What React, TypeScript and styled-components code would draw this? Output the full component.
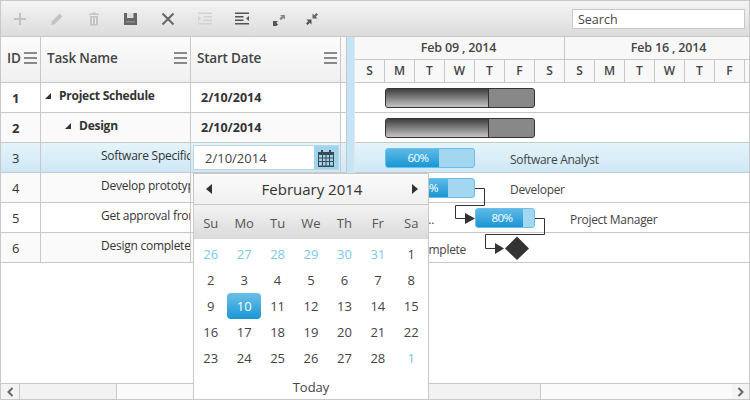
import React from "react"
import styled, { createGlobalStyle } from "styled-components"

const FONT = `"Open Sans", "Noto Sans", sans-serif`
const LINE = "#c8c8c8"

const GlobalStyle = createGlobalStyle`
  html, body {
    margin: 0;
    padding: 0;
    background: #fff;
  }
`

interface Task {
  id: number
  name: string
  date: string
  level: number
  bold?: boolean
}

const tasks: Task[] = [
  { id: 1, name: "Project Schedule", date: "2/10/2014", level: 0, bold: true },
  { id: 2, name: "Design", date: "2/10/2014", level: 1, bold: true },
  { id: 3, name: "Software Specification", date: "2/10/2014", level: 2 },
  { id: 4, name: "Develop prototype", date: "2/10/2014", level: 2 },
  { id: 5, name: "Get approval from customer", date: "2/10/2014", level: 2 },
  { id: 6, name: "Design complete", date: "2/10/2014", level: 2 },
]

const dayLetters = ["S", "M", "T", "W", "T", "F", "S", "S", "M", "T", "W", "T", "F", "S"]
const weekDays = ["Su", "Mo", "Tu", "We", "Th", "Fr", "Sa"]
const calendarDays = [
  26, 27, 28, 29, 30, 31, 1, 2, 3, 4, 5, 6, 7, 8, 9, 10, 11, 12, 13, 14, 15, 16, 17, 18, 19, 20, 21, 22, 23, 24, 25, 26,
  27, 28, 1,
]

const Frame = styled.div`
  position: relative;
  display: flex;
  flex-direction: column;
  box-sizing: border-box;
  width: 750px;
  height: 400px;
  border: 1px solid ${LINE};
  overflow: hidden;
  background: #fff;
  font-family: ${FONT};
  color: #333;
`

const Toolbar = styled.div`
  display: flex;
  align-items: center;
  box-sizing: border-box;
  height: 36px;
  flex: none;
  padding: 0 4px 0 0;
  background: linear-gradient(#f4f4f4, #dcdcdc);
  border-bottom: 1px solid ${LINE};
`

const ToolButton = styled.div<{ $width?: number; $drop?: number }>`
  display: flex;
  align-items: center;
  justify-content: center;
  width: ${(p) => p.$width ?? 37}px;
  height: 35px;
  flex: none;
  padding-top: ${(p) => p.$drop ?? 0}px;
  box-sizing: border-box;
`

const SearchBox = styled.div`
  box-sizing: border-box;
  width: 173px;
  height: 20px;
  margin-left: auto;
  padding-left: 5px;
  background: #fff;
  border: 1px solid ${LINE};
  font-size: 12.5px;
  line-height: 19px;
  color: #444;
`

const Body = styled.div`
  display: flex;
  flex: 1;
  min-height: 0;
`

const GridPane = styled.div`
  width: 340px;
  flex: none;
`

const columns = `40px 150px 150px`

const GridHeader = styled.div`
  display: grid;
  grid-template-columns: ${columns};
  height: 46px;
  box-sizing: border-box;
  background: linear-gradient(#fbfbfb, #f0f0f0);
  border-bottom: 1px solid ${LINE};
`

const HeaderCell = styled.div<{ $pad: number }>`
  display: flex;
  align-items: center;
  justify-content: space-between;
  box-sizing: border-box;
  padding: 0 3px 3px ${(p) => p.$pad}px;
  border-right: 1px solid ${LINE};
  font-size: 13.5px;
  font-weight: 600;
  color: #444;
  letter-spacing: -0.2px;
`

const GridRow = styled.div<{ $state: "plain" | "alt" | "active" }>`
  display: grid;
  grid-template-columns: ${columns};
  height: 30px;
  box-sizing: border-box;
  border-bottom: 1px solid ${LINE};
  background: ${(p) =>
    p.$state === "active" ? "linear-gradient(#e4f4fb, #cfe8f6)" : p.$state === "alt" ? "#fafafa" : "#fff"};
`

const Cell = styled.div`
  display: flex;
  align-items: center;
  box-sizing: border-box;
  min-width: 0;
  border-right: 1px solid ${LINE};
  overflow: hidden;
  white-space: nowrap;
`

const IdCell = styled(Cell)<{ $bold?: boolean }>`
  padding-left: 11px;
  font-size: 13px;
  font-weight: ${(p) => (p.$bold ? 700 : 400)};
`

const TaskCell = styled(Cell)<{ $level: number; $bold?: boolean }>`
  padding-left: ${(p) => (p.$level === 2 ? 60 : 4 + p.$level * 20)}px;
  padding-bottom: 4px;
  font-size: 12px;
  letter-spacing: -0.25px;
  font-weight: ${(p) => (p.$bold ? 700 : 400)};
`

const Expander = styled.span`
  display: inline-block;
  flex: none;
  width: 0;
  height: 0;
  margin-right: 8px;
  border-style: solid;
  border-width: 0 0 6px 6px;
  border-color: transparent transparent #333 transparent;
`

const DateCell = styled(Cell)<{ $bold?: boolean }>`
  padding-left: 10px;
  font-size: 12.5px;
  font-weight: ${(p) => (p.$bold ? 700 : 400)};
`

const EditorCell = styled(Cell)`
  padding-left: 2px;
`

const DateEditor = styled.div`
  display: flex;
  box-sizing: border-box;
  width: 146px;
  height: 25px;
  border: 1px solid #bcd6e4;
  background: #fff;
`

const DateInput = styled.div`
  flex: 1;
  padding-left: 11px;
  font-size: 13px;
  line-height: 24px;
  color: #444;
`

const DateButton = styled.div`
  display: flex;
  align-items: center;
  justify-content: center;
  width: 24px;
  background: #a0d3ec;
`

const SpacerColumn = styled.div`
  width: 6px;
  flex: none;
  box-sizing: border-box;
`

const SpacerHead = styled.div`
  height: 46px;
  box-sizing: border-box;
  background: linear-gradient(#fbfbfb, #f0f0f0);
  border-bottom: 1px solid ${LINE};
  border-right: 1px solid ${LINE};
`

const SpacerRow = styled.div<{ $active: boolean }>`
  height: 30px;
  box-sizing: border-box;
  border-bottom: 1px solid ${LINE};
  border-right: 1px solid ${LINE};
  background: ${(p) => (p.$active ? "linear-gradient(#e4f4fb, #cfe8f6)" : "#fff")};
`

const Splitter = styled.div`
  width: 8px;
  flex: none;
  box-sizing: border-box;
  background: #c4e5f5;
  border-right: 1px solid #e6e6e6;
`

const ChartPane = styled.div`
  position: relative;
  flex: 1;
  min-width: 0;
  overflow: hidden;
`

const ChartHeader = styled.div`
  height: 46px;
  box-sizing: border-box;
  border-bottom: 1px solid ${LINE};
  background: #f8f8f8;
`

const WeekRow = styled.div`
  display: flex;
  height: 23px;
  box-sizing: border-box;
  border-bottom: 1px solid ${LINE};
`

const WeekCell = styled.div`
  flex: none;
  width: 210px;
  box-sizing: border-box;
  padding-right: 2px;
  border-right: 1px solid ${LINE};
  text-align: center;
  font-size: 12.5px;
  font-weight: 600;
  line-height: 21px;
  letter-spacing: -0.15px;
  color: #444;
`

const DayRow = styled.div`
  display: flex;
  height: 22px;
`

const DayCell = styled.div`
  flex: none;
  width: 30px;
  box-sizing: border-box;
  border-right: 1px solid ${LINE};
  text-align: center;
  font-size: 12px;
  font-weight: 600;
  line-height: 22px;
  color: #444;
`

const ChartRow = styled.div<{ $active: boolean }>`
  position: relative;
  height: 30px;
  box-sizing: border-box;
  border-bottom: 1px solid ${LINE};
  background: ${(p) => (p.$active ? "linear-gradient(#e4f4fb, #cfe8f6)" : "#fff")};
`

const SummaryBar = styled.div`
  position: absolute;
  left: 30px;
  top: 5px;
  display: flex;
  box-sizing: border-box;
  width: 150px;
  height: 20px;
  border: 1px solid #333;
  border-radius: 3px;
  overflow: hidden;
  background: #888;
`

const SummaryProgress = styled.div`
  width: 102px;
  border-right: 1px solid #333;
  background: linear-gradient(#3e3e3e, #c4c4c4);
`

const TaskBar = styled.div<{ $left: number; $width: number }>`
  position: absolute;
  left: ${(p) => p.$left}px;
  top: 5px;
  box-sizing: border-box;
  width: ${(p) => p.$width}px;
  height: 20px;
  border: 1px solid #6cbfe9;
  border-radius: 3px;
  overflow: hidden;
  background: #a3d6ef;
`

const TaskProgress = styled.div<{ $width: number; $inset: number }>`
  box-sizing: border-box;
  width: ${(p) => p.$width}px;
  height: 100%;
  padding-left: ${(p) => p.$inset}px;
  background: linear-gradient(#5ebae6, #1a96d5);
  color: #fff;
  text-align: center;
  font-size: 11.5px;
  line-height: 18px;
  letter-spacing: -0.5px;
`

const BarLabel = styled.div<{ $left?: number; $right?: number }>`
  position: absolute;
  top: 0;
  ${(p) => (p.$left !== undefined ? `left: ${p.$left}px;` : "")}
  ${(p) => (p.$right !== undefined ? `right: ${p.$right}px;` : "")}
  font-size: 12px;
  line-height: 33px;
  letter-spacing: -0.3px;
  color: #444;
  white-space: nowrap;
`

const Connectors = styled.svg`
  position: absolute;
  left: 0;
  top: 46px;
`

const ScrollRow = styled.div`
  display: flex;
  flex: none;
  height: 16px;
  box-sizing: border-box;
  border-top: 1px solid ${LINE};
`

const ScrollButton = styled.div<{ $right?: boolean }>`
  display: flex;
  align-items: center;
  justify-content: center;
  box-sizing: border-box;
  flex: none;
  width: ${(p) => (p.$right ? 17 : 19)}px;
  background: #f3f3f3;
  ${(p) => (p.$right ? "" : `border-right: 1px solid ${LINE};`)}
`

const ScrollSegment = styled.div<{ $thumb?: boolean; $width?: number }>`
  box-sizing: border-box;
  ${(p) => (p.$width ? `width: ${p.$width}px; flex: none;` : "flex: 1;")}
  background: ${(p) => (p.$thumb ? "#fafafa" : "#f2f2f2")};
  ${(p) => (p.$thumb ? `border-left: 1px solid ${LINE};` : "")}
`

const Calendar = styled.div`
  position: absolute;
  left: 192px;
  top: 172px;
  box-sizing: border-box;
  width: 236px;
  height: 228px;
  background: #fff;
  border: 1px solid ${LINE};
  color: #444;
`

const CalendarTitle = styled.div`
  display: flex;
  align-items: center;
  justify-content: space-between;
  box-sizing: border-box;
  height: 31px;
  padding: 0 10px 0 12px;
  background: linear-gradient(#fbfbfb, #f0f0f0);
  border-bottom: 1px solid ${LINE};
  font-size: 15px;
  color: #333;
`

const Arrow = styled.span<{ $right?: boolean }>`
  width: 0;
  height: 0;
  border-style: solid;
  border-width: ${(p) => (p.$right ? "5.5px 0 5.5px 6px" : "5.5px 6px 5.5px 0")};
  border-color: transparent ${(p) => (p.$right ? "transparent" : "#333")} transparent
    ${(p) => (p.$right ? "#333" : "transparent")};
`

const WeekHead = styled.div`
  display: grid;
  grid-template-columns: repeat(7, minmax(0, 1fr));
  height: 34px;
  background: linear-gradient(#f3f3f3, #dadada);
  font-size: 13px;
  line-height: 37px;
  text-align: center;
  color: #555;
`

const DayGrid = styled.div`
  display: grid;
  grid-template-columns: repeat(7, minmax(0, 1fr));
  grid-auto-rows: 26px;
  padding-top: 2px;
`

const CalendarDay = styled.div<{ $muted: boolean; $selected: boolean }>`
  justify-self: center;
  width: 34px;
  height: 26px;
  border-radius: 4px;
  text-align: center;
  font-size: 13px;
  line-height: 26px;
  color: ${(p) => (p.$selected ? "#fff" : p.$muted ? "#7cc8ea" : "#444")};
  background: ${(p) => (p.$selected ? "linear-gradient(#6cc0e8, #1a96d5)" : "transparent")};
`

const TodayLink = styled.div`
  margin-top: 4px;
  text-align: center;
  font-size: 13px;
  line-height: 24px;
  color: #444;
`

const PlusIcon = () => (
  <svg width="14" height="14" viewBox="0 0 14 14">
    <path d="M7 1v12M1 7h12" stroke="#c2c2c2" strokeWidth="2" />
  </svg>
)

const PencilIcon = () => (
  <svg width="14" height="14" viewBox="0 0 14 14">
    <path d="M1 13l.8-3.6L9.6 1.6l2.8 2.8-7.8 7.8z" fill="#c4c4c4" />
  </svg>
)

const TrashIcon = () => (
  <svg width="12" height="14" viewBox="0 0 12 14">
    <path d="M1 1.5h3.5V.5h3v1H11v1.5H1zM2 4h8v9.5H2z" fill="#c4c4c4" />
    <path d="M4.5 5.5v6.5M7.5 5.5v6.5" stroke="#eee" strokeWidth="1" />
  </svg>
)

const SaveIcon = () => (
  <svg width="13" height="12" viewBox="0 0 13 12">
    <path d="M0 0h13v12H0z" fill="#666" />
    <path d="M3 0h6.500v5H3z" fill="#dedede" />
    <path d="M2 8h9v1.500H2z" fill="#8a8a8a" />
  </svg>
)

const CloseIcon = () => (
  <svg width="14" height="14" viewBox="0 0 14 14">
    <path d="M1.500 1.500l11 11M12.500 1.500l-11 11" stroke="#666" strokeWidth="2" />
  </svg>
)

const IndentIcon = ({ color, flip }: { color: string; flip?: boolean }) => (
  <svg width="14" height="13" viewBox="0 0 14 13">
    <path d="M0 .5h14V2H0zM0 11h14v1.500H0z" fill={color} />
    {flip ? (
      <path d="M0 4h8.500v1.500H0zM0 7.500h8.500V9H0zM14 4v5l-3-2.500z" fill={color} />
    ) : (
      <path d="M5.500 4H14v1.500H5.500zM5.500 7.500H14V9H5.500zM0 4v5l3-2.500z" fill={color} />
    )}
  </svg>
)

const ExpandIcon = () => (
  <svg width="12" height="11" viewBox="0 0 12 11">
    <path d="M7 0h5v4.500L10.300 3 8 5.200 6.400 3.600 8.700 1.500z" fill="#888" />
    <path d="M0 11V6h5L3.300 7.700 5 9.400 3.500 11z" fill="#555" />
  </svg>
)

const CollapseIcon = () => (
  <svg width="12" height="12" viewBox="0 0 12 12">
    <path d="M6.500 5.500v-5l1.700 1.700L10.400 0 12 1.600 9.800 3.800l1.700 1.700z" fill="#666" />
    <path d="M5.500 6.500v5L3.800 9.800 1.600 12 0 10.400l2.200-2.200L.5 6.500z" fill="#555" />
  </svg>
)

const MenuIcon = ({ width }: { width: number }) => (
  <svg width={width} height="12" viewBox={`0 0 ${width} 12`}>
    <path d={`M0 1h${width}M0 6h${width}M0 11h${width}`} stroke="#666" strokeWidth="1.500" />
  </svg>
)

const CalendarIcon = () => (
  <svg width="16" height="18" viewBox="0 0 16 18">
    <path d="M0 3h16v15H0z" fill="#3a4a52" />
    <path d="M3 1h2v3H3zM11 1h2v3h-2z" fill="#3a4a52" />
    <path
      d="M1 6h3v2.500H1zM5 6h2.500v2.500H5zM8.500 6H11v2.500H8.500zM12 6h3v2.500h-3zM1 9.500h3V12H1zM5 9.500h2.500V12H5zM8.500 9.500H11V12H8.500zM12 9.500h3V12h-3zM1 13h3v3.500H1zM5 13h2.500v3.500H5zM8.500 13H11v3.500H8.500zM12 13h3v3.500h-3z"
      fill="#a0d3ec"
    />
  </svg>
)

const Chevron = ({ right }: { right?: boolean }) => (
  <svg width="8" height="10" viewBox="0 0 8 10">
    <path d={right ? "M1.500 1l4 4-4 4" : "M6.500 1l-4 4 4 4"} fill="none" stroke="#666" strokeWidth="2" />
  </svg>
)

const rowState = (task: Task) => (task.id === 3 ? "active" : task.id % 2 === 0 ? "alt" : "plain")

export default function App() {
  return (
    <Frame>
      <GlobalStyle />
      <Toolbar>
        <ToolButton><PlusIcon /></ToolButton>
        <ToolButton><PencilIcon /></ToolButton>
        <ToolButton><TrashIcon /></ToolButton>
        <ToolButton><SaveIcon /></ToolButton>
        <ToolButton><CloseIcon /></ToolButton>
        <ToolButton><IndentIcon color="#d2d2d2" /></ToolButton>
        <ToolButton><IndentIcon color="#555" flip /></ToolButton>
        <ToolButton $width={38} $drop={4}><ExpandIcon /></ToolButton>
        <ToolButton $width={28}><CollapseIcon /></ToolButton>
        <SearchBox>Search</SearchBox>
      </Toolbar>
      <Body>
        <GridPane>
          <GridHeader>
            <HeaderCell $pad={6}>ID<MenuIcon width={13} /></HeaderCell>
            <HeaderCell $pad={6}>Task Name<MenuIcon width={13} /></HeaderCell>
            <HeaderCell $pad={6}>Start Date<MenuIcon width={13} /></HeaderCell>
          </GridHeader>
          {tasks.map((task) => (
            <GridRow key={task.id} $state={rowState(task)}>
              <IdCell $bold={task.bold}>{task.id}</IdCell>
              <TaskCell $level={task.level} $bold={task.bold}>
                {task.bold && <Expander />}
                {task.name}
              </TaskCell>
              {task.id === 3 ? (
                <EditorCell>
                  <DateEditor>
                    <DateInput>{task.date}</DateInput>
                    <DateButton><CalendarIcon /></DateButton>
                  </DateEditor>
                </EditorCell>
              ) : (
                <DateCell $bold={task.bold}>{task.date}</DateCell>
              )}
            </GridRow>
          ))}
        </GridPane>
        <SpacerColumn>
          <SpacerHead />
          {tasks.map((task) => (
            <SpacerRow key={task.id} $active={task.id === 3} />
          ))}
        </SpacerColumn>
        <Splitter />
        <ChartPane>
          <ChartHeader>
            <WeekRow>
              <WeekCell>Feb 09 , 2014</WeekCell>
              <WeekCell>Feb 16 , 2014</WeekCell>
            </WeekRow>
            <DayRow>
              {dayLetters.map((letter, i) => (
                <DayCell key={i}>{letter}</DayCell>
              ))}
            </DayRow>
          </ChartHeader>
          <ChartRow $active={false}>
            <SummaryBar><SummaryProgress /></SummaryBar>
          </ChartRow>
          <ChartRow $active={false}>
            <SummaryBar><SummaryProgress /></SummaryBar>
          </ChartRow>
          <ChartRow $active>
            <TaskBar $left={30} $width={90}><TaskProgress $width={53} $inset={11}>60%</TaskProgress></TaskBar>
            <BarLabel $left={155}>Software Analyst</BarLabel>
          </ChartRow>
          <ChartRow $active={false}>
            <TaskBar $left={30} $width={90}><TaskProgress $width={62} $inset={21}>70%</TaskProgress></TaskBar>
            <BarLabel $left={155}>Developer</BarLabel>
          </ChartRow>
          <ChartRow $active={false}>
            <TaskBar $left={120} $width={60}><TaskProgress $width={47} $inset={5}>80%</TaskProgress></TaskBar>
            <BarLabel $right={315}>Get approval...</BarLabel>
            <BarLabel $left={215}>Project Manager</BarLabel>
          </ChartRow>
          <ChartRow $active={false}>
            <BarLabel $right={283}>Design complete</BarLabel>
          </ChartRow>
          <Connectors width="394" height="180" viewBox="0 0 394 180">
            <path d="M120 105.500H129.500V122.500H100.500V135.500H110" fill="none" stroke="#333" />
            <path d="M110 130L120 135.500L110 141z" fill="#333" />
            <path d="M180 135.500H189.500V151.500H130.500V165.500H140" fill="none" stroke="#333" />
            <path d="M140 160L149 165.500L140 171z" fill="#333" />
            <path d="M162 153.500L174 165.500L162 177L150 165.500z" fill="#333" />
          </Connectors>
        </ChartPane>
      </Body>
      <ScrollRow>
        <ScrollButton><Chevron /></ScrollButton>
        <ScrollSegment $width={96} />
        <ScrollSegment $thumb $width={200} />
        <ScrollSegment $width={224} />
        <ScrollSegment $thumb />
        <ScrollButton $right><Chevron right /></ScrollButton>
      </ScrollRow>
      <Calendar>
        <CalendarTitle>
          <Arrow />
          February 2014
          <Arrow $right />
        </CalendarTitle>
        <WeekHead>
          {weekDays.map((day) => (
            <div key={day}>{day}</div>
          ))}
        </WeekHead>
        <DayGrid>
          {calendarDays.map((day, i) => (
            <CalendarDay key={i} $muted={i < 6 || i === 34} $selected={i === 15}>
              {day}
            </CalendarDay>
          ))}
        </DayGrid>
        <TodayLink>Today</TodayLink>
      </Calendar>
    </Frame>
  )
}
